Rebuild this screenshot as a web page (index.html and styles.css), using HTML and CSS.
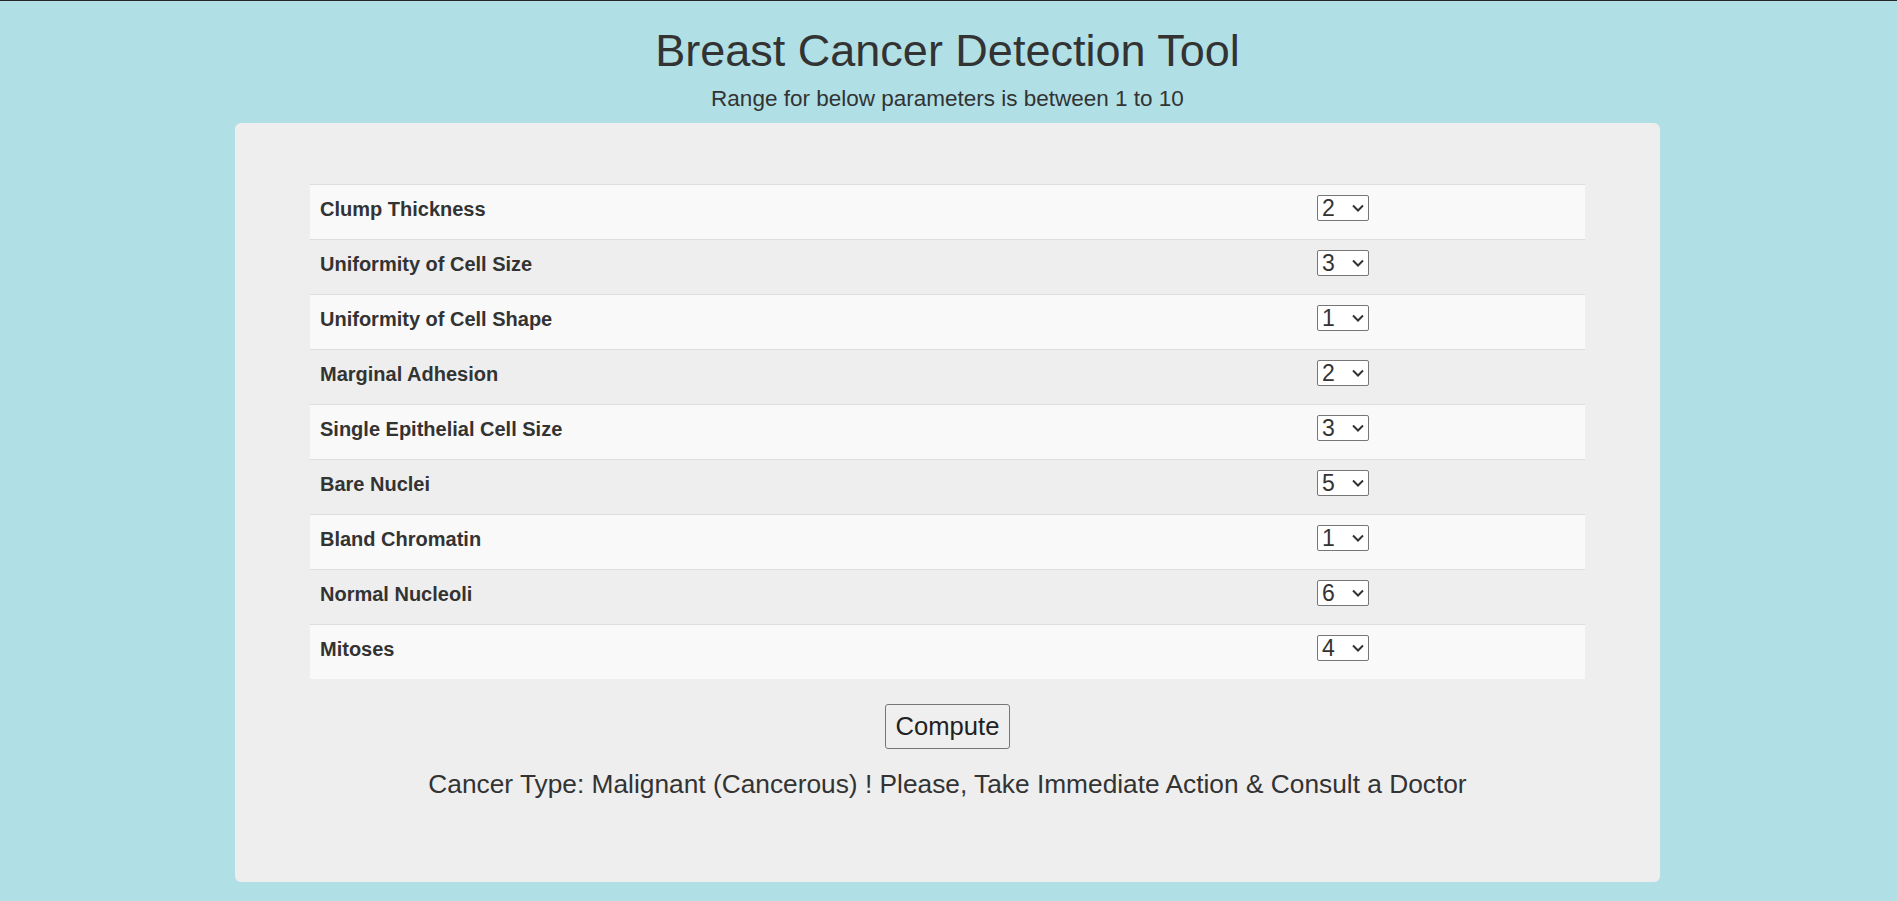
FILE: index.html
```html
<!DOCTYPE html>
<html lang="en">
<head>
<meta charset="utf-8">
<title>Breast Cancer Detection Tool</title>
<link rel="stylesheet" href="styles.css">
</head>
<body>
<header class="header">
  <h1 class="title">Breast Cancer Detection Tool</h1>
  <p class="subtitle">Range for below parameters is between 1 to 10</p>
</header>
<main class="card">
  <table class="params">
    <colgroup><col class="col-label"><col class="col-value"></colgroup>
    <tbody>
      <tr><td class="label">Clump Thickness</td><td><span class="sel"><select><option>1</option><option selected>2</option><option>3</option><option>4</option><option>5</option><option>6</option><option>7</option><option>8</option><option>9</option><option>10</option></select><svg class="chev" width="12" height="8" viewBox="0 0 12 8"><polyline points="1,1.5 6,6.5 11,1.5" fill="none" stroke="#333" stroke-width="2"/></svg></span></td></tr>
      <tr><td class="label">Uniformity of Cell Size</td><td><span class="sel"><select><option>1</option><option>2</option><option selected>3</option><option>4</option><option>5</option><option>6</option><option>7</option><option>8</option><option>9</option><option>10</option></select><svg class="chev" width="12" height="8" viewBox="0 0 12 8"><polyline points="1,1.5 6,6.5 11,1.5" fill="none" stroke="#333" stroke-width="2"/></svg></span></td></tr>
      <tr><td class="label">Uniformity of Cell Shape</td><td><span class="sel"><select><option selected>1</option><option>2</option><option>3</option><option>4</option><option>5</option><option>6</option><option>7</option><option>8</option><option>9</option><option>10</option></select><svg class="chev" width="12" height="8" viewBox="0 0 12 8"><polyline points="1,1.5 6,6.5 11,1.5" fill="none" stroke="#333" stroke-width="2"/></svg></span></td></tr>
      <tr><td class="label">Marginal Adhesion</td><td><span class="sel"><select><option>1</option><option selected>2</option><option>3</option><option>4</option><option>5</option><option>6</option><option>7</option><option>8</option><option>9</option><option>10</option></select><svg class="chev" width="12" height="8" viewBox="0 0 12 8"><polyline points="1,1.5 6,6.5 11,1.5" fill="none" stroke="#333" stroke-width="2"/></svg></span></td></tr>
      <tr><td class="label">Single Epithelial Cell Size</td><td><span class="sel"><select><option>1</option><option>2</option><option selected>3</option><option>4</option><option>5</option><option>6</option><option>7</option><option>8</option><option>9</option><option>10</option></select><svg class="chev" width="12" height="8" viewBox="0 0 12 8"><polyline points="1,1.5 6,6.5 11,1.5" fill="none" stroke="#333" stroke-width="2"/></svg></span></td></tr>
      <tr><td class="label">Bare Nuclei</td><td><span class="sel"><select><option>1</option><option>2</option><option>3</option><option>4</option><option selected>5</option><option>6</option><option>7</option><option>8</option><option>9</option><option>10</option></select><svg class="chev" width="12" height="8" viewBox="0 0 12 8"><polyline points="1,1.5 6,6.5 11,1.5" fill="none" stroke="#333" stroke-width="2"/></svg></span></td></tr>
      <tr><td class="label">Bland Chromatin</td><td><span class="sel"><select><option selected>1</option><option>2</option><option>3</option><option>4</option><option>5</option><option>6</option><option>7</option><option>8</option><option>9</option><option>10</option></select><svg class="chev" width="12" height="8" viewBox="0 0 12 8"><polyline points="1,1.5 6,6.5 11,1.5" fill="none" stroke="#333" stroke-width="2"/></svg></span></td></tr>
      <tr><td class="label">Normal Nucleoli</td><td><span class="sel"><select><option>1</option><option>2</option><option>3</option><option>4</option><option>5</option><option selected>6</option><option>7</option><option>8</option><option>9</option><option>10</option></select><svg class="chev" width="12" height="8" viewBox="0 0 12 8"><polyline points="1,1.5 6,6.5 11,1.5" fill="none" stroke="#333" stroke-width="2"/></svg></span></td></tr>
      <tr><td class="label">Mitoses</td><td><span class="sel"><select><option>1</option><option>2</option><option>3</option><option selected>4</option><option>5</option><option>6</option><option>7</option><option>8</option><option>9</option><option>10</option></select><svg class="chev" width="12" height="8" viewBox="0 0 12 8"><polyline points="1,1.5 6,6.5 11,1.5" fill="none" stroke="#333" stroke-width="2"/></svg></span></td></tr>
    </tbody>
  </table>
  <div class="actions"><button class="btn" type="button">Compute</button></div>
  <p class="result">Cancer Type: Malignant (Cancerous) ! Please, Take Immediate Action &amp; Consult a Doctor</p>
</main>
</body>
</html>
```
FILE: styles.css
```css
html, body {
  margin: 0;
  padding: 0;
}
body {
  background: #b0e0e6;
  border-top: 1px solid #262626;
  font-family: "Liberation Sans", Arial, sans-serif;
  color: #333;
  padding-right: 2px;
  min-height: 900px;
}
.header {
  padding-top: 25px;
  text-align: center;
}
.title {
  margin: 0;
  font-size: 45px;
  line-height: 50px;
  font-weight: normal;
}
.subtitle {
  margin: 10px 0 11px;
  font-size: 22.5px;
  line-height: 26px;
}
.card {
  display: block;
  box-sizing: border-box;
  width: 1425px;
  margin: 0 auto;
  padding: 61px 75px 83px;
  background: #eeeeee;
  border-radius: 6px;
}
.params {
  width: 100%;
  border-collapse: collapse;
  table-layout: fixed;
}
.col-label { width: 997px; }
.params td {
  border-top: 1px solid #dddddd;
  padding: 10px 10px 16px;
  line-height: 28px;
  font-size: 20px;
  vertical-align: top;
}
.params tr:nth-child(odd) td {
  background: #f9f9f9;
}
.params td.label {
  font-weight: bold;
  color: #333;
}
.sel {
  position: relative;
  display: inline-block;
  vertical-align: top;
  height: 26px;
}
.sel select {
  -webkit-appearance: none;
  appearance: none;
  box-sizing: border-box;
  width: 52px;
  height: 26px;
  margin: 0;
  padding: 0 0 0 4px;
  border: 1px solid #767676;
  border-radius: 2px;
  background: #ffffff;
  color: #333;
  font-family: "Liberation Sans", Arial, sans-serif;
  font-size: 23px;
  line-height: 24px;
  display: block;
}
.chev {
  position: absolute;
  left: 35px;
  top: 9px;
  pointer-events: none;
}
.actions {
  margin-top: 25px;
  text-align: center;
}
.btn {
  box-sizing: border-box;
  height: 45px;
  padding: 0 10px;
  margin: 0;
  border: 1px solid #767676;
  border-radius: 3px;
  background: #efefef;
  color: #222;
  font-family: "Liberation Sans", Arial, sans-serif;
  font-size: 25.6px;
  vertical-align: top;
}
.result {
  margin: 20px 0 0;
  font-size: 26.3px;
  line-height: 30px;
  text-align: center;
}
```
